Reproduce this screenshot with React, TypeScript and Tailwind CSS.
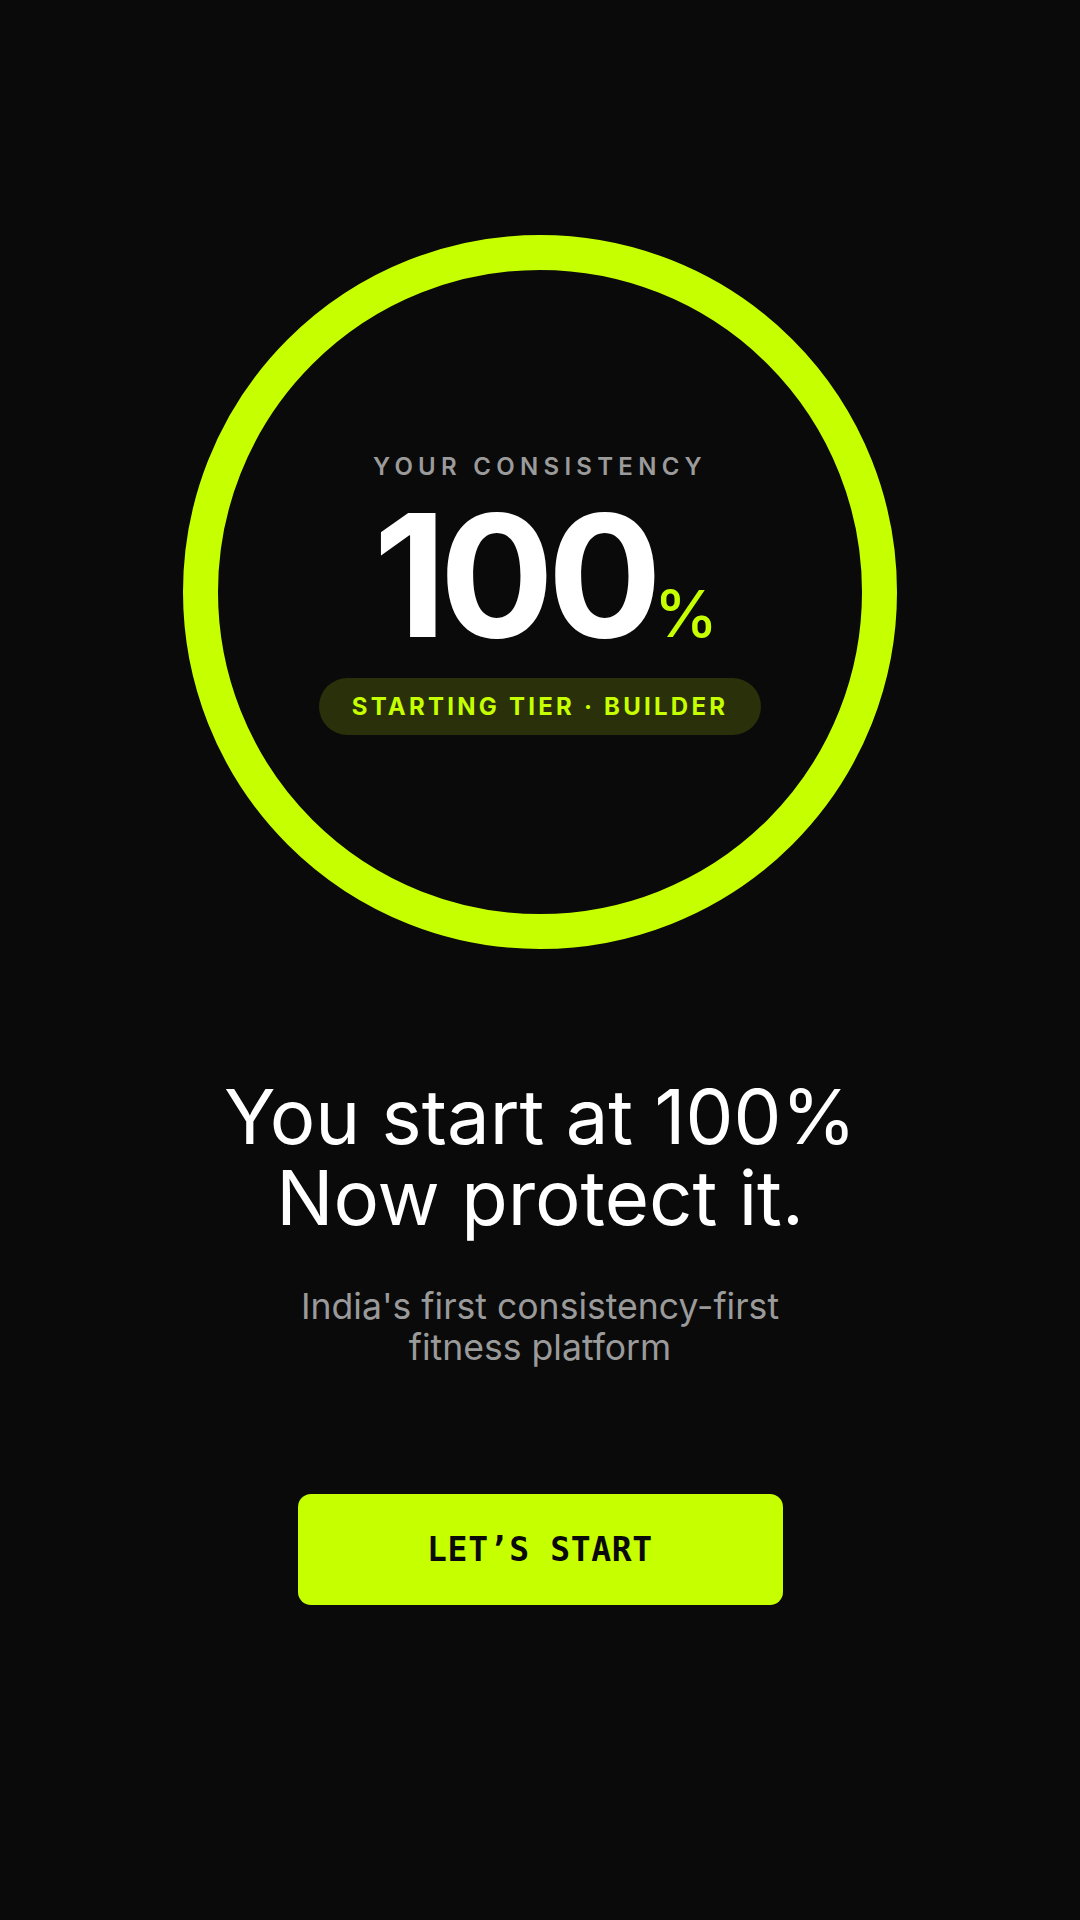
export default function App() {
  return (
    <div className="min-h-[1920px] w-full bg-[#0a0a0a] flex flex-col items-center font-['Inter',sans-serif]">
      {/* Consistency ring */}
      <div className="mt-[235px] w-[714px] h-[714px] rounded-full border-[35px] border-[#c6ff00] flex flex-col items-center pt-[185px]">
        <div className="text-[24px] leading-[24px] font-semibold tracking-[0.22em] text-[#9b9b9b]">
          YOUR CONSISTENCY
        </div>
        <div className="mt-[11px] pl-[11px] flex items-baseline">
          <span className="text-[170px] leading-[170px] font-bold tracking-[-0.04em] text-white">100</span>
          <span className="ml-[-1px] text-[64px] leading-none font-medium text-[#c6ff00]">%</span>
        </div>
        <div className="mt-[18px] h-[57px] px-[33px] rounded-full bg-[#2a300a] flex items-center">
          <span className="text-[24px] leading-none font-bold tracking-[0.135em] text-[#c6ff00]">
            STARTING TIER · BUILDER
          </span>
        </div>
      </div>

      {/* Headline */}
      <h1 className="mt-[127px] text-center text-[76px] leading-[80.7px] font-normal text-white">
        You start at 100%
        <br />
        Now protect it.
      </h1>

      <p className="mt-[49px] text-center text-[35.6px] leading-[41px] font-normal text-[#9a9a9a]">
        India's first consistency-first
        <br />
        fitness platform
      </p>

      <button className="mt-[126px] w-[485px] h-[111px] rounded-[13px] bg-[#c6ff00] flex items-center justify-center">
        <span className="font-['DejaVu_Sans_Mono',monospace] text-[33px] leading-none font-bold tracking-[0.02em] text-[#0a0a0a]">
          LET’S START
        </span>
      </button>
    </div>
  );
}
